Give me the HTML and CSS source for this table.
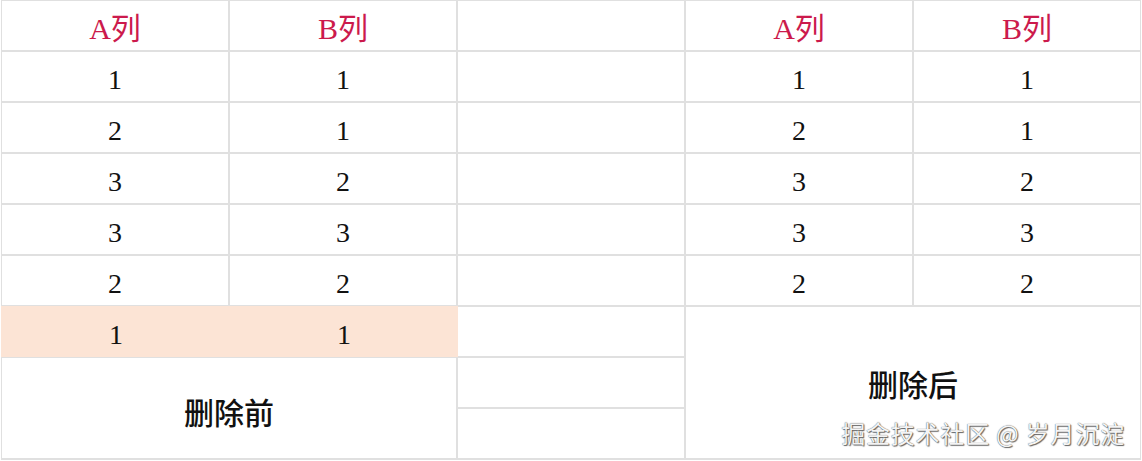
FILE: index.html
```html
<!DOCTYPE html>
<html lang="zh">
<head>
<meta charset="utf-8">
<title>删除前后</title>
<link rel="stylesheet" href="styles.css">
</head>
<body>
<div class="sheet">
  <div class="cell head">A列</div>
  <div class="cell head">B列</div>
  <div class="cell"></div>
  <div class="cell head">A列</div>
  <div class="cell head">B列</div>

  <div class="cell num">1</div><div class="cell num">1</div><div class="cell"></div><div class="cell num">1</div><div class="cell num">1</div>
  <div class="cell num">2</div><div class="cell num">1</div><div class="cell"></div><div class="cell num">2</div><div class="cell num">1</div>
  <div class="cell num">3</div><div class="cell num">2</div><div class="cell"></div><div class="cell num">3</div><div class="cell num">2</div>
  <div class="cell num">3</div><div class="cell num">3</div><div class="cell"></div><div class="cell num">3</div><div class="cell num">3</div>
  <div class="cell num">2</div><div class="cell num">2</div><div class="cell"></div><div class="cell num">2</div><div class="cell num">2</div>

  <div class="cell hl">
    <span class="num">1</span>
    <span class="num">1</span>
  </div>
  <div class="cell"></div>
  <div class="cell merged-right"><span class="label">删除后</span></div>

  <div class="cell merged-left"><span class="label">删除前</span></div>
  <div class="cell"></div>
  <div class="cell"></div>
</div>
<div class="watermark">掘金技术社区 @ 岁月沉淀</div>
</body>
</html>
```

FILE: styles.css
```css
html, body {
  margin: 0;
  padding: 0;
  background: #ffffff;
}

body {
  width: 1142px;
  height: 461px;
  overflow: hidden;
  position: relative;
}

.sheet {
  display: grid;
  grid-template-columns: 226px 226px 226px 226px 226px;
  grid-template-rows: repeat(9, 49px);
  gap: 2px;
  padding: 1px 1px 2px 1px;
  margin-left: 1px;
  width: 1138px;
  background: #e0e0e0;
  font-family: "Liberation Serif", "Noto Sans CJK SC", serif;
}

.cell {
  background: #ffffff;
  display: flex;
  align-items: center;
  justify-content: center;
  font-size: 28px;
  color: #111111;
}

.head {
  color: #cc1a4c;
  font-size: 30px;
  padding-top: 1px;
}

.num {
  padding-top: 6px;
}

.hl {
  grid-column: 1 / 3;
  background: #fce4d5;
  display: grid;
  grid-template-columns: 228px 228px;
  margin-right: -2px;
  margin-left: -1px;
  padding-left: 1px;
  margin-top: -1px;
  margin-bottom: -1px;
}

.hl .num {
  display: flex;
  align-items: center;
  justify-content: center;
}

.merged-left {
  grid-column: 1 / 3;
  grid-row: 8 / 10;
  padding-top: 6px;
}

.merged-right {
  grid-column: 4 / 6;
  grid-row: 7 / 10;
  padding-top: 0;
}

.label {
  font-family: "Noto Sans CJK SC", sans-serif;
  font-size: 30px;
  font-weight: 500;
  color: #111111;
}

.watermark {
  position: absolute;
  right: 17px;
  bottom: 12px;
  font-family: "Noto Sans CJK SC", sans-serif;
  font-size: 24px;
  line-height: 32px;
  color: #f4f4f4;
  letter-spacing: 0.8px;
  text-shadow: 0 0 1px #3a3a3a, 1px 1px 1px #6a6a6a;
}
```
